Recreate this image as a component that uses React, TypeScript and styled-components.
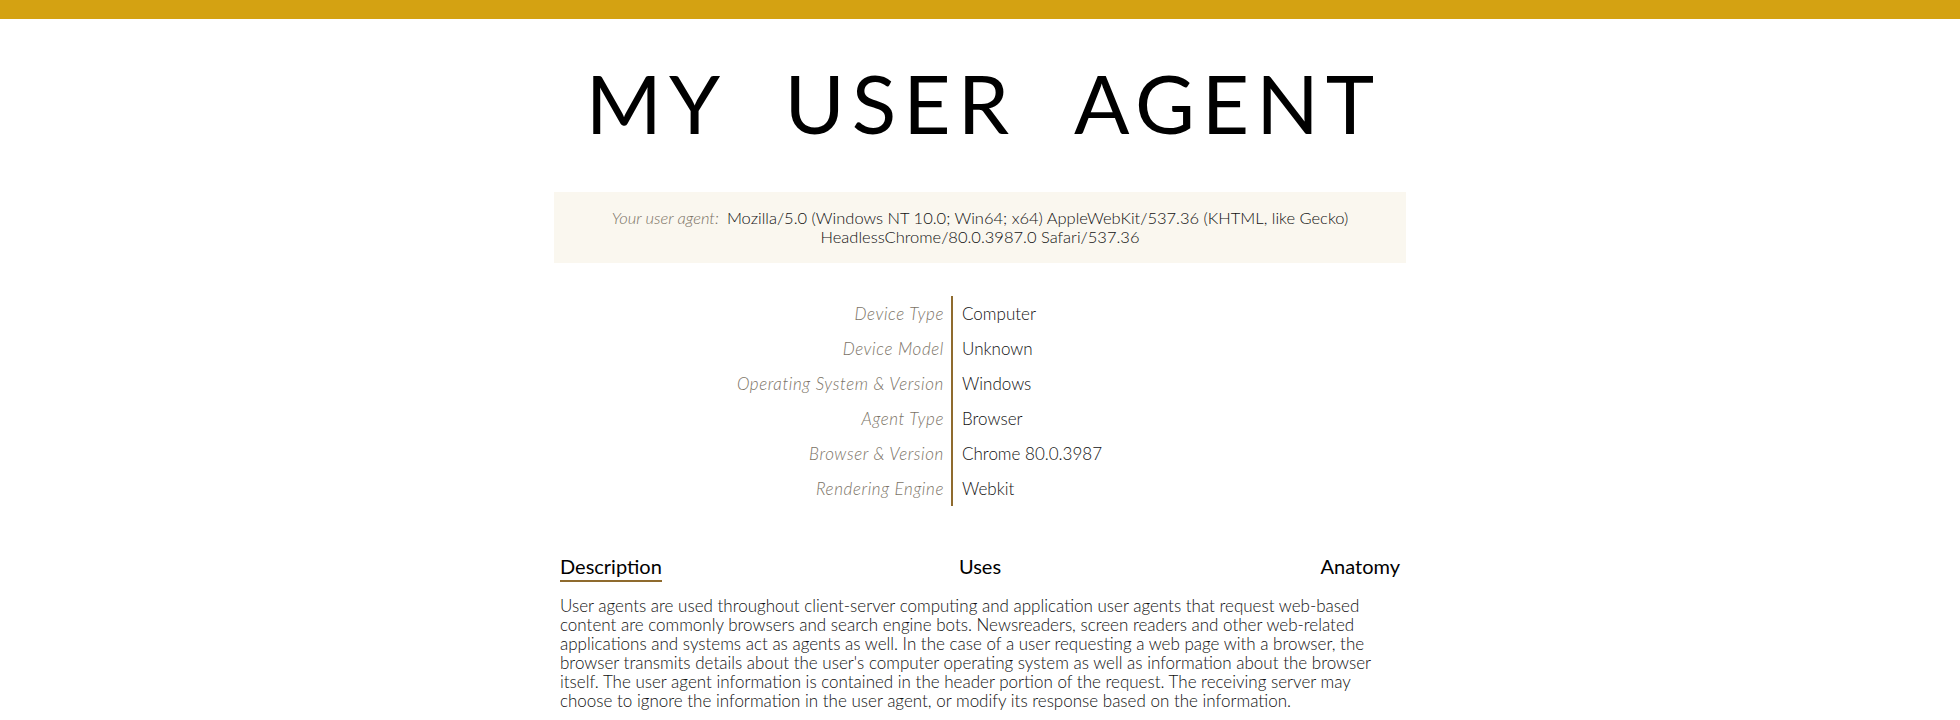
import React from "react";
import styled, { createGlobalStyle } from "styled-components";

const GlobalStyle = createGlobalStyle`
  html, body {
    margin: 0;
    padding: 0;
    background: #ffffff;
  }
  body {
    font-family: "Lato", "Open Sans", sans-serif;
    color: #1a1a1a;
  }
`;

const TopBar = styled.div`
  height: 19px;
  background: #d4a212;
`;

const Page = styled.main`
  width: 840px;
  margin: 0 auto;
`;

const Title = styled.h1`
  margin: 0 -200px;
  padding: 33px 0 0 0.085em;
  font-family: "Lato", sans-serif;
  font-weight: 400;
  font-size: 82px;
  line-height: 100px;
  letter-spacing: 0.085em;
  word-spacing: 0.4em;
  white-space: nowrap;
  text-align: center;
  color: #000;
`;

const AgentBox = styled.section`
  margin: 40px -6px 0;
  padding: 17px 20px 16px;
  background: #faf7ef;
  text-align: center;
  font-size: 16.5px;
  line-height: 19px;
  font-weight: 300;
  color: #111;
`;

const AgentLabel = styled.span`
  font-style: italic;
  color: #7b7366;
  margin-right: 8px;
`;

const InfoGrid = styled.dl`
  display: grid;
  grid-template-columns: 393px 1fr;
  margin: 33px 0 0;
  font-size: 17px;
  font-weight: 300;
`;

const InfoLabel = styled.dt`
  height: 35px;
  line-height: 35px;
  padding-right: 7px;
  text-align: right;
  font-style: italic;
  letter-spacing: 0.6px;
  color: #7b7366;
  border-right: 2px solid #8f6b2e;
  box-sizing: border-box;
`;

const InfoValue = styled.dd`
  height: 35px;
  line-height: 35px;
  margin: 0;
  padding-left: 9px;
  color: #111;
`;

const Tabs = styled.nav`
  display: grid;
  grid-template-columns: 1fr 1fr 1fr;
  margin-top: 48px;
  font-size: 20px;
  line-height: 24px;
  font-weight: 400;
`;

const Tab = styled.span<{ $align: "left" | "center" | "right"; $active?: boolean }>`
  justify-self: ${(p) => (p.$align === "left" ? "start" : p.$align === "center" ? "center" : "end")};
  color: #000;
  padding-bottom: 2px;
  border-bottom: 2px solid ${(p) => (p.$active ? "#8f6b2e" : "transparent")};
`;

const Description = styled.p`
  margin: 14px 0 0;
  font-size: 17px;
  line-height: 19px;
  font-weight: 300;
  color: #111;
`;

const rows: [string, string][] = [
  ["Device Type", "Computer"],
  ["Device Model", "Unknown"],
  ["Operating System & Version", "Windows"],
  ["Agent Type", "Browser"],
  ["Browser & Version", "Chrome 80.0.3987"],
  ["Rendering Engine", "Webkit"],
];

export default function App() {
  return (
    <>
      <GlobalStyle />
      <TopBar />
      <Page>
        <Title>MY USER AGENT</Title>
        <AgentBox>
          <AgentLabel>Your user agent:</AgentLabel>
          Mozilla/5.0 (Windows NT 10.0; Win64; x64) AppleWebKit/537.36 (KHTML, like Gecko)
          <br />
          HeadlessChrome/80.0.3987.0 Safari/537.36
        </AgentBox>
        <InfoGrid>
          {rows.map(([k, v]) => (
            <React.Fragment key={k}>
              <InfoLabel>{k}</InfoLabel>
              <InfoValue>{v}</InfoValue>
            </React.Fragment>
          ))}
        </InfoGrid>
        <Tabs>
          <Tab $align="left" $active>
            Description
          </Tab>
          <Tab $align="center">Uses</Tab>
          <Tab $align="right">Anatomy</Tab>
        </Tabs>
        <Description>
          User agents are used throughout client-server computing and application user agents that request
          web-based content are commonly browsers and search engine bots. Newsreaders, screen readers and other
          web-related applications and systems act as agents as well. In the case of a user requesting a web page
          with a browser, the browser transmits details about the user's computer operating system as well as
          information about the browser itself. The user agent information is contained in the header portion of
          the request. The receiving server may choose to ignore the information in the user agent, or modify its
          response based on the information.
        </Description>
      </Page>
    </>
  );
}
